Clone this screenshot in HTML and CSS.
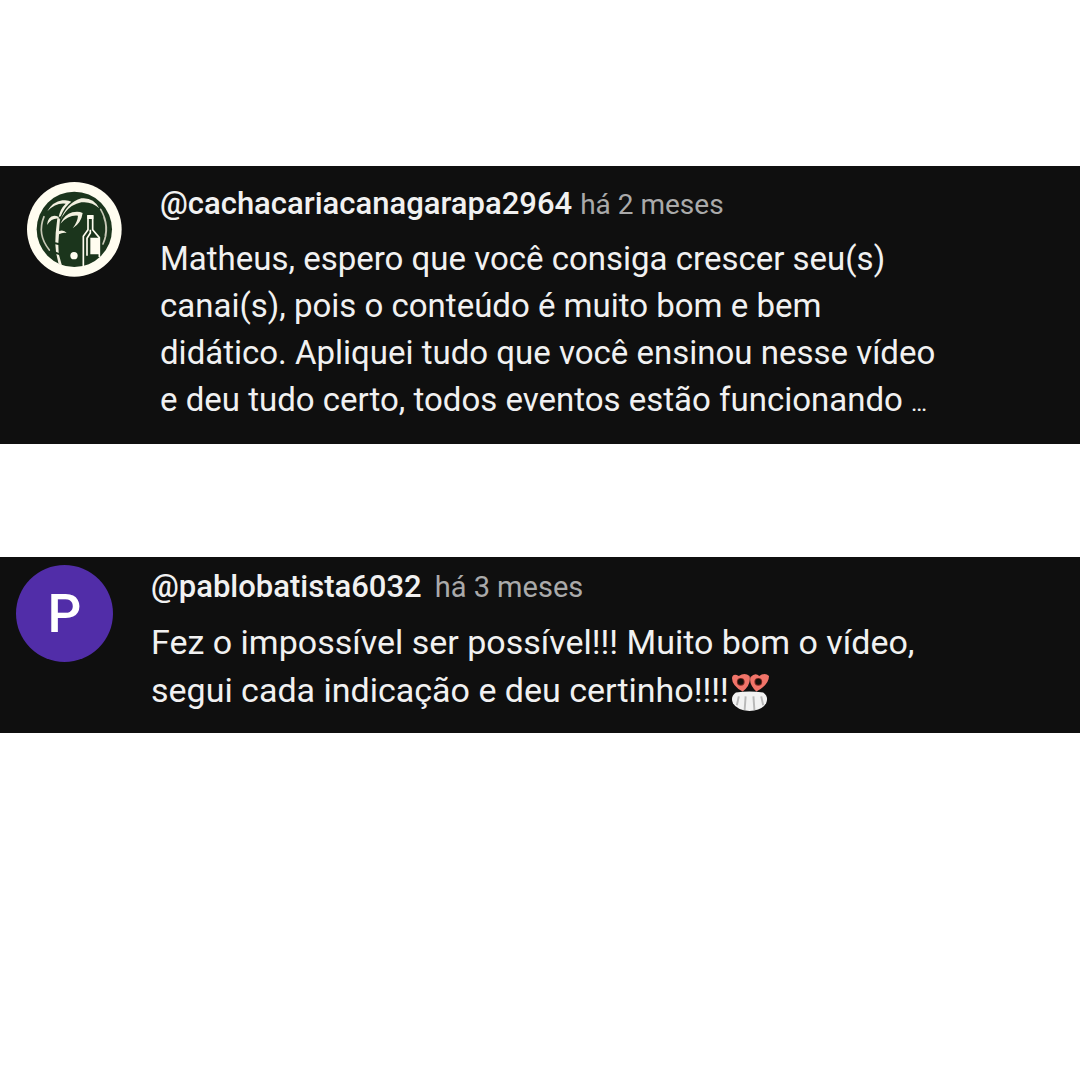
FILE: index.html
```html
<!DOCTYPE html>
<html lang="pt-BR">
<head>
<meta charset="utf-8">
<meta name="viewport" content="width=device-width, initial-scale=1">
<title>Comentários</title>
<link rel="stylesheet" href="styles.css">
</head>
<body>
<main class="comments">
  <article class="comment comment--first">
    <svg class="avatar" viewBox="21 21 285 285" role="img" aria-label="Cachaçaria Canagarapa">
      <circle cx="163" cy="163" r="142" fill="#fffdf0"/>
      <circle cx="163" cy="163" r="113" fill="#1b351c"/>
      <g fill="#f3f0e0">
        <path d="M82 109Q98 80 127 76Q144 74 154 80Q134 94 122 124L116 126Q120 102 137 86Q107 82 82 109Z"/>
        <path d="M120 139Q140 82 184 70Q220 66 238 100Q214 78 184 82Q154 88 136 112Q126 124 120 139Z"/>
        <path d="M121 146Q134 118 157 112Q176 108 188 114Q184 144 158 160Q173 139 174 122Q146 119 121 146Z"/>
        <path d="M81 150Q83 124 103 122Q116 122 119 132Q98 126 81 150Z"/>
        <path d="M112 130L120 133L117 168Q132 163 140 174Q128 171 117 178L115 204L106 202L107 174Z"/>
        <path d="M106 208L115 210L116 234L108 230ZM109 237L117 240L126 272L116 268Z"/>
      </g>
      <g fill="none" stroke="#c8c8b6" stroke-width="5" stroke-linecap="round">
        <path d="M72 125Q50 178 88 225"/>
        <path d="M242 103Q272 155 249 207M252 127Q262 153 256 181"/>
      </g>
      <g fill="none" stroke="#fffdf0" stroke-width="5">
        <path d="M190 275V184L204 164V123H218V164L238 188V246"/>
        <path d="M201 242V190L211 174V164"/>
      </g>
      <path d="M211 188H238V238H211ZM202 120H220V132H202Z" fill="#fffdf0"/>
      <circle cx="162" cy="242" r="11" fill="#fffdf0"/>
    </svg>
    <div class="content">
      <header class="meta"><a class="author" href="#">@cachacariacanagarapa2964</a><a class="time" href="#">há 2 meses</a></header>
      <p class="text">Matheus, espero que você consiga crescer seu(s) canai(s), pois o conteúdo é muito bom e bem didático. Apliquei tudo que você ensinou nesse vídeo e deu tudo certo, todos eventos estão funcionando <span class="more">…</span></p>
    </div>
  </article>
  <article class="comment comment--second">
    <div class="avatar avatar--letter">P</div>
    <div class="content">
      <header class="meta"><a class="author" href="#">@pablobatista6032</a><a class="time" href="#">há 3 meses</a></header>
      <p class="text">Fez o impossível ser possível!!! Muito bom o vídeo, segui cada indicação e deu certinho!!!!<svg class="emoji" viewBox="0 0 40 40" role="img" aria-label="Olhos de coração e sorriso">
        <path d="M12 19Q1 13 1 5Q2 0 8 3Q14 -1 19 3Q21 12 12 19ZM26 19Q18 11 20 4Q25 -1 29 3Q35 -1 39 3Q39 12 26 19Z" fill="#f17469"/>
        <circle cx="10" cy="9" r="4" fill="#7b2822"/><circle cx="28" cy="9" r="4" fill="#7b2822"/>
        <circle cx="10" cy="9" r="3" fill="#16110c"/><circle cx="28" cy="9" r="3" fill="#16110c"/>
        <path d="M5 20Q19 18 33 20Q39 24 36 31Q32 38 19 39Q6 38 2 31Q-1 24 5 20Z" fill="#f2f2f2"/>
        <path d="M8 24L6 33M15 24L14 38M23 24L24 38M31 24L33 33" stroke="#b8b8b8" stroke-width="2"/>
      </svg></p>
    </div>
  </article>
</main>
</body>
</html>
```
FILE: styles.css
```css
* { box-sizing: border-box; }
body {
  margin: 0;
  background: #fff;
  font-family: Roboto, "Liberation Sans", sans-serif;
}
.comments {
  display: flex;
  flex-direction: column;
  gap: 113px;
  padding-top: 166px;
}
.comment {
  display: flex;
  align-items: flex-start;
  gap: 38px;
  background: #0f0f0f;
  color: #f1f1f1;
}
.comment--first { padding: 16px 24px 21px 27px; }
.comment--second { padding: 8px 24px 19px 16px; }
.avatar {
  flex: none;
  width: 95px;
  height: 95px;
}
.avatar--letter {
  display: flex;
  align-items: center;
  justify-content: center;
  width: 97px;
  height: 97px;
  border-radius: 50%;
  background: #512da8;
  color: #fff;
  font-size: 53px;
  font-weight: 500;
}
.content {
  flex: 1;
  max-width: 790px;
}
.meta {
  display: flex;
  align-items: baseline;
  gap: 8px;
  line-height: 44px;
}
.author, .time { text-decoration: none; }
.author {
  color: #f1f1f1;
  font-size: 31px;
  font-weight: 500;
}
.time {
  color: #aaa;
  font-size: 28px;
}
.text {
  margin: 8px 0 0;
  font-size: 33px;
  line-height: 47px;
}
.comment--second .meta { gap: 13px; }
.comment--second .time { font-size: 29px; }
.comment--second .text {
  margin-top: 9px;
  font-size: 34px;
  line-height: 48px;
}
.more {
  font-size: 24px;
  line-height: 24px;
}
.emoji {
  width: 39px;
  height: 39px;
  margin-left: 2px;
  vertical-align: -10px;
}
```
